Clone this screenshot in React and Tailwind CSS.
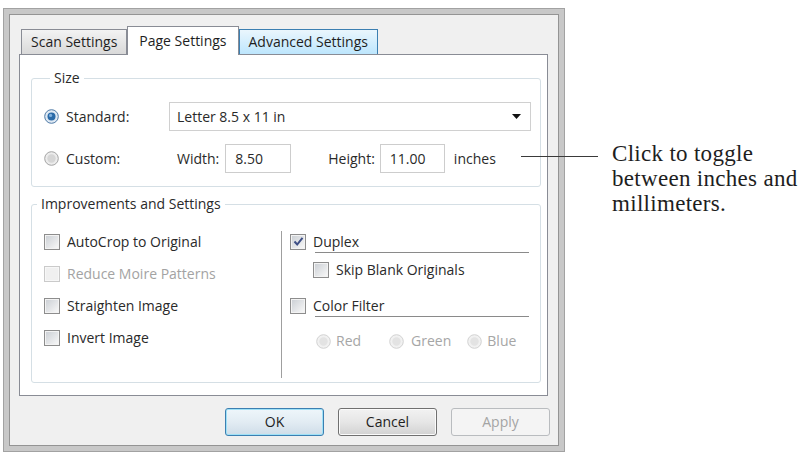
import React from "react";

const Radio = ({ state }) => {
  if (state === "on") {
    return (
      <svg width="15" height="15" viewBox="0 0 15 15" className="shrink-0">
        <circle cx="7.5" cy="7.5" r="6.8" fill="#dfe9f3" stroke="#4f7aa6" />
        <circle cx="7.5" cy="7.5" r="4" fill="#2a6aa8" />
        <circle cx="6.6" cy="6.4" r="1.6" fill="#7fb0de" />
      </svg>
    );
  }
  if (state === "disabled") {
    return (
      <svg width="15" height="15" viewBox="0 0 15 15" className="shrink-0">
        <circle cx="7.5" cy="7.5" r="6.8" fill="#f1f1f1" stroke="#d2d2d2" />
        <circle cx="7.5" cy="7.5" r="4.2" fill="#e3e3e3" />
      </svg>
    );
  }
  return (
    <svg width="15" height="15" viewBox="0 0 15 15" className="shrink-0">
      <circle cx="7.5" cy="7.5" r="6.8" fill="#ececec" stroke="#a3a3a3" />
      <circle cx="7.5" cy="7.5" r="4.2" fill="#d6d6d6" />
    </svg>
  );
};

const Check = ({ checked, disabled }) => (
  <span
    className={`w-[16px] h-[16px] border flex items-center justify-center shrink-0 ${
      disabled ? "border-[#cacaca] bg-[#f7f7f7]" : "border-[#8d8d8d] bg-[#f3f3f3]"
    }`}
  >
    <span
      className={`w-[12px] h-[12px] flex items-center justify-center ${
        disabled ? "bg-[#f0f0f0]" : "bg-linear-to-br from-[#cdd1d6] to-[#f7f7f7]"
      }`}
    >
      {checked && (
        <svg width="11" height="11" viewBox="0 0 11 11">
          <path d="M1.5 5.5 L4.2 8.5 L9.5 1.8" fill="none" stroke="#3e4f86" strokeWidth="2" />
        </svg>
      )}
    </span>
  </span>
);

const CheckRow = ({ label, checked, disabled, className = "" }) => (
  <div className={`flex items-center gap-[7px] ${className}`}>
    <Check checked={checked} disabled={disabled} />
    <span className={disabled ? "text-[#a3a3a3]" : "text-[#2a2a2a]"}>{label}</span>
  </div>
);

const Tab = ({ label, active, hover }) => {
  if (active) {
    return (
      <div className="h-[29px] -mb-px relative z-10 bg-white border border-b-0 border-[#898c95] px-[11px] flex items-center text-[#1e1e1e]">
        {label}
      </div>
    );
  }
  return (
    <div
      className={`h-[25px] border border-b-0 px-[9px] flex items-center text-[#1e1e1e] ${
        hover
          ? "border-[#3c7fb1] bg-linear-to-b from-[#eaf6fd] to-[#bde6fd]"
          : "border-[#898c95] bg-linear-to-b from-[#f3f3f3] to-[#d9d9d9]"
      }`}
    >
      {label}
    </div>
  );
};

const Button = ({ label, kind }) => {
  const styles = {
    default:
      "border-[#3c7fb1] bg-linear-to-b from-[#eef6fb] via-[#e2ecf3] to-[#cfdde8] shadow-[inset_0_0_0_1px_#9fe1f7] text-[#1e1e1e]",
    normal:
      "border-[#707070] bg-linear-to-b from-[#f2f2f2] via-[#e6e6e6] to-[#d2d2d2] shadow-[inset_0_0_0_1px_#fbfbfb] text-[#1e1e1e]",
    disabled: "border-[#b9bcbf] bg-[#f4f4f4] text-[#a4a4a4]",
  };
  return (
    <div
      className={`w-[99px] h-[28px] rounded-[3px] border flex items-center justify-center ${styles[kind]}`}
    >
      {label}
    </div>
  );
};

export default function App() {
  return (
    <div className="relative w-[801px] h-[457px] bg-white flex items-start font-['Open_Sans','Noto_Sans',sans-serif] text-[14px] leading-[20px] overflow-hidden">
      {/* Dialog */}
      <div className="ml-[3px] mt-[8px] w-[562px] h-[444px] border border-[#a2a2a2] bg-[#c8c8c8] p-[5px] shrink-0">
        <div className="w-full h-full border border-[#949494] bg-[#f0f0f0] pt-[11px] pl-[9px] pr-[10px] pb-[8px] flex flex-col">
          {/* Tabs */}
          <div className="flex items-end pl-[2px] h-[28px]">
            <Tab label="Scan Settings" />
            <Tab label="Page Settings" active />
            <Tab label="Advanced Settings" hover />
          </div>

          {/* Panel */}
          <div className="h-[342px] border border-[#898c95] bg-white pt-[13px] pl-[11px] pr-[6px]">
            <fieldset className="border border-[#d5dfe5] rounded-[3px] pt-[14px] pb-[13px] pl-[12px] pr-[9px]">
              <legend className="ml-[6px] px-[4px] text-[#2a2a2a]">Size</legend>
              <div className="flex items-center h-[29px]">
                <div className="w-[125px] flex items-center gap-[7px] text-[#2a2a2a]">
                  <Radio state="on" />
                  <span>Standard:</span>
                </div>
                <div className="flex-1 h-[29px] border border-[#d0d0d0] bg-white flex items-center pl-[7px] pr-[9px] text-[#2a2a2a]">
                  <span className="flex-1">Letter 8.5 x 11 in</span>
                  <svg width="9" height="5" viewBox="0 0 9 5">
                    <path d="M0 0 H9 L4.5 5 Z" fill="#111" />
                  </svg>
                </div>
              </div>
              <div className="flex items-center h-[29px] mt-[13px] text-[#2a2a2a]">
                <div className="w-[125px] flex items-center gap-[7px]">
                  <Radio state="off" />
                  <span>Custom:</span>
                </div>
                <span className="ml-[8px]">Width:</span>
                <div className="ml-[6px] w-[66px] h-[29px] border border-[#cdcdcd] bg-white flex items-center pl-[9px]">
                  8.50
                </div>
                <span className="ml-[37px]">Height:</span>
                <div className="ml-[5px] w-[65px] h-[29px] border border-[#cdcdcd] bg-white flex items-center pl-[9px]">
                  11.00
                </div>
                <span className="ml-[9px]">inches</span>
              </div>
            </fieldset>

            <fieldset className="mt-[7px] border border-[#d5dfe5] rounded-[3px] pt-[17px] pb-[4px]">
              <legend className="ml-[5px] px-[4px] text-[#2a2a2a]">Improvements and Settings</legend>
              <div className="flex h-[147px]">
                <div className="w-[249px] pl-[12px] flex flex-col gap-[10px]">
                  <CheckRow label="AutoCrop to Original" className="h-[22px]" />
                  <CheckRow label="Reduce Moire Patterns" disabled className="h-[22px]" />
                  <CheckRow label="Straighten Image" className="h-[22px]" />
                  <CheckRow label="Invert Image" className="h-[22px]" />
                </div>
                <div className="flex-1 border-l border-[#9f9f9f] pl-[8px] pr-[11px] flex flex-col">
                  <CheckRow label="Duplex" checked className="h-[21px]" />
                  <div className="ml-[25px] h-px bg-[#8a8a8a]" />
                  <CheckRow label="Skip Blank Originals" className="h-[20px] mt-[7px] ml-[23px]" />
                  <CheckRow label="Color Filter" className="h-[21px] mt-[15px]" />
                  <div className="ml-[25px] h-px bg-[#8a8a8a]" />
                  <div className="h-[20px] mt-[14px] ml-[26px] flex items-center text-[#a6a6a6]">
                    <Radio state="disabled" />
                    <span className="ml-[5px]">Red</span>
                    <span className="ml-[28px]">
                      <Radio state="disabled" />
                    </span>
                    <span className="ml-[7px]">Green</span>
                    <span className="ml-[16px]">
                      <Radio state="disabled" />
                    </span>
                    <span className="ml-[5px]">Blue</span>
                  </div>
                </div>
              </div>
            </fieldset>
          </div>

          {/* Buttons */}
          <div className="mt-[12px] flex justify-end gap-[14px] -mr-[2px]">
            <Button label="OK" kind="default" />
            <Button label="Cancel" kind="normal" />
            <Button label="Apply" kind="disabled" />
          </div>
        </div>
      </div>

      {/* Callout leader */}
      <div className="absolute left-[521px] top-[156px] w-[77px] h-px bg-[#3a3a3a]" />

      {/* Callout text */}
      <div className="ml-[47px] mt-[141px] font-['Liberation_Serif',serif] text-[23px] leading-[25px] tracking-[0.3px] text-[#1e1e1e] whitespace-nowrap">
        <div>Click to toggle</div>
        <div>between inches and</div>
        <div>millimeters.</div>
      </div>
    </div>
  );
}
